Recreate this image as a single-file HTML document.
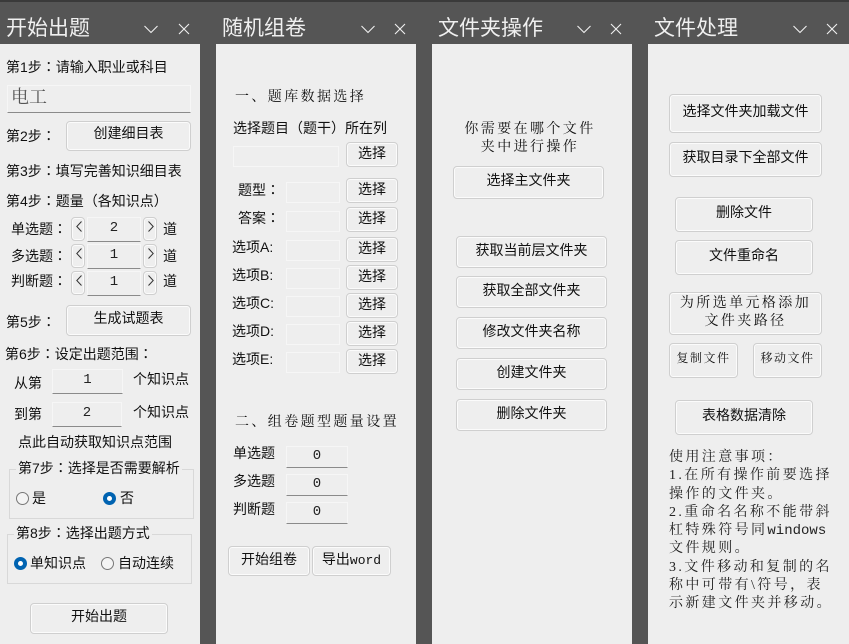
<!DOCTYPE html>
<html lang="zh"><head><meta charset="utf-8"><style>
html,body{margin:0;padding:0}
body{width:849px;height:644px;background:#555;position:relative;overflow:hidden;font:14px/20px "Liberation Sans","Noto Sans CJK SC",sans-serif;color:#111;text-spacing-trim:space-all}
#top{position:absolute;left:0;top:0;width:849px;height:2px;background:#3a3a3a}
.p{position:absolute;top:44px;height:600px;background:#eee}
.h{position:absolute;top:14px;font-size:21px;line-height:30px;color:#f0f0f0;white-space:nowrap}
svg.i{position:absolute;top:23px;width:16px;height:12px;fill:none;stroke:#f0f0f0;stroke-width:1.1}
svg.a{position:absolute;width:6px;height:11px;fill:none;stroke:#333;stroke-width:1}
.t{position:absolute;white-space:nowrap;line-height:20px}
.t i,.l i{font-style:normal;font-family:"Noto Sans CJK TC",sans-serif;font-feature-settings:"locl" 0}
.s{position:absolute;white-space:nowrap;font-family:"Liberation Serif","Noto Serif CJK SC",serif;font-size:14px;line-height:18px;letter-spacing:2.4px;color:#111}
.b{position:absolute;box-sizing:border-box;border:1px solid #cfcfcf;border-radius:4px;background:#eee;box-shadow:inset 0 0 0 1px #fbfbfb;text-align:center;white-space:nowrap;color:#111}
.f{position:absolute;box-sizing:border-box;background:#eee;border:1px solid #f6f6f6;border-bottom:1px solid #8a8a8a;text-align:center;color:#222;line-height:20px;font-family:"Liberation Mono",monospace}
.e{position:absolute;box-sizing:border-box;border:1px solid #f6f6f6;background:#eee}
.g{position:absolute;box-sizing:border-box;border:1px solid #d8d8d8}
.l{position:absolute;background:#eee;padding:0 2px;white-space:nowrap;line-height:20px}
.r{position:absolute;box-sizing:border-box;width:13px;height:13px;border-radius:50%;border:1px solid #777;background:#f4f4f4}
.c{position:absolute;box-sizing:border-box;width:13px;height:13px;border-radius:50%;border:4px solid #0063b1;background:#fff}
</style></head><body>
<div id="top"></div>

<div class="h" style="left:6px">开始出题</div>
<svg class="i" style="left:143px"><path d="M1.500 3L8 9.500L14.500 3"/></svg>
<svg class="i" style="left:176px"><path d="M3 1L13 11M13 1L3 11"/></svg>
<div class="h" style="left:222px">随机组卷</div>
<svg class="i" style="left:360px"><path d="M1.500 3L8 9.500L14.500 3"/></svg>
<svg class="i" style="left:392px"><path d="M3 1L13 11M13 1L3 11"/></svg>
<div class="h" style="left:438px">文件夹操作</div>
<svg class="i" style="left:576px"><path d="M1.500 3L8 9.500L14.500 3"/></svg>
<svg class="i" style="left:608px"><path d="M3 1L13 11M13 1L3 11"/></svg>
<div class="h" style="left:654px">文件处理</div>
<svg class="i" style="left:792px"><path d="M1.500 3L8 9.500L14.500 3"/></svg>
<svg class="i" style="left:824px"><path d="M3 1L13 11M13 1L3 11"/></svg>

<div class="p" style="left:0;width:200px"></div>
<div class="p" style="left:216px;width:200px"></div>
<div class="p" style="left:432px;width:200px"></div>
<div class="p" style="left:648px;width:201px"></div>

<!-- Panel 1 -->
<div class="t" style="left:6px;top:57px">第1步<i>：</i>请输入职业或科目</div>
<div class="f" style="left:7px;top:85px;width:184px;height:28px;text-align:left;padding-left:3px;font:18px/22px 'Liberation Serif','Noto Serif CJK SC',serif;color:#555">电工</div>
<div class="t" style="left:6px;top:126px">第2步<i>：</i></div>
<div class="b" style="left:66px;top:121px;width:125px;height:30px;line-height:22px">创建细目表</div>
<div class="t" style="left:6px;top:161px">第3步<i>：</i>填写完善知识细目表</div>
<div class="t" style="left:6px;top:191px">第4步<i>：</i>题量（各知识点）</div>

<div class="t" style="left:11px;top:219px">单选题<i>：</i></div>
<div class="b" style="left:71px;top:217px;width:14px;height:24px"></div>
<svg class="a" style="left:76px;top:221px"><path d="M5.500 .5L.8 5.500L5.500 10.500"/></svg>
<div class="f" style="left:87px;top:217px;width:54px;height:25px">2</div>
<div class="b" style="left:143px;top:217px;width:14px;height:24px"></div>
<svg class="a" style="left:148px;top:221px"><path d="M.5 .5L5.200 5.500L.5 10.500"/></svg>
<div class="t" style="left:163px;top:219px">道</div>

<div class="t" style="left:11px;top:246px">多选题<i>：</i></div>
<div class="b" style="left:71px;top:244px;width:14px;height:24px"></div>
<svg class="a" style="left:76px;top:248px"><path d="M5.500 .5L.8 5.500L5.500 10.500"/></svg>
<div class="f" style="left:87px;top:244px;width:54px;height:25px">1</div>
<div class="b" style="left:143px;top:244px;width:14px;height:24px"></div>
<svg class="a" style="left:148px;top:248px"><path d="M.5 .5L5.200 5.500L.5 10.500"/></svg>
<div class="t" style="left:163px;top:246px">道</div>

<div class="t" style="left:11px;top:271px">判断题<i>：</i></div>
<div class="b" style="left:71px;top:271px;width:14px;height:24px"></div>
<svg class="a" style="left:76px;top:275px"><path d="M5.500 .5L.8 5.500L5.500 10.500"/></svg>
<div class="f" style="left:87px;top:271px;width:54px;height:25px">1</div>
<div class="b" style="left:143px;top:271px;width:14px;height:24px"></div>
<svg class="a" style="left:148px;top:275px"><path d="M.5 .5L5.200 5.500L.5 10.500"/></svg>
<div class="t" style="left:163px;top:271px">道</div>

<div class="t" style="left:6px;top:312px">第5步<i>：</i></div>
<div class="b" style="left:66px;top:305px;width:125px;height:31px;line-height:24px">生成试题表</div>
<div class="t" style="left:5px;top:344px">第6步<i>：</i>设定出题范围<i>：</i></div>
<div class="t" style="left:14px;top:373px">从第</div>
<div class="f" style="left:52px;top:369px;width:71px;height:25px">1</div>
<div class="t" style="left:133px;top:369px">个知识点</div>
<div class="t" style="left:14px;top:404px">到第</div>
<div class="f" style="left:52px;top:402px;width:70px;height:25px">2</div>
<div class="t" style="left:133px;top:402px">个知识点</div>
<div class="t" style="left:18px;top:432px">点此自动获取知识点范围</div>

<div class="g" style="left:9px;top:469px;width:185px;height:50px"></div>
<div class="l" style="left:16px;top:458px">第7步<i>：</i>选择是否需要解析</div>
<div class="r" style="left:16px;top:492px"></div>
<div class="t" style="left:32px;top:488px">是</div>
<div class="c" style="left:103px;top:492px"></div>
<div class="t" style="left:120px;top:488px">否</div>

<div class="g" style="left:7px;top:534px;width:185px;height:50px"></div>
<div class="l" style="left:14px;top:523px">第8步<i>：</i>选择出题方式</div>
<div class="c" style="left:14px;top:557px"></div>
<div class="t" style="left:30px;top:553px">单知识点</div>
<div class="r" style="left:101px;top:557px"></div>
<div class="t" style="left:118px;top:553px">自动连续</div>
<div class="b" style="left:30px;top:603px;width:138px;height:31px;line-height:25px">开始出题</div>

<!-- Panel 2 -->
<div class="s" style="left:235px;top:89px">一、题库数据选择</div>
<div class="t" style="left:233px;top:118px">选择题目（题干）所在列</div>
<div class="e" style="left:233px;top:146px;width:106px;height:21px"></div>
<div class="b" style="left:346px;top:142px;width:52px;height:25px;line-height:21px">选择</div>
<div class="t" style="left:238px;top:180px">题型<i>：</i></div>
<div class="e" style="left:286px;top:182px;width:54px;height:21px"></div>
<div class="b" style="left:346px;top:178px;width:52px;height:25px;line-height:21px">选择</div>
<div class="t" style="left:238px;top:208px">答案<i>：</i></div>
<div class="e" style="left:286px;top:211px;width:54px;height:21px"></div>
<div class="b" style="left:346px;top:207px;width:52px;height:25px;line-height:21px">选择</div>
<div class="t" style="left:232px;top:237px">选项A:</div>
<div class="e" style="left:286px;top:240px;width:54px;height:21px"></div>
<div class="b" style="left:346px;top:237px;width:52px;height:25px;line-height:21px">选择</div>
<div class="t" style="left:232px;top:265px">选项B:</div>
<div class="e" style="left:286px;top:268px;width:54px;height:21px"></div>
<div class="b" style="left:346px;top:265px;width:52px;height:25px;line-height:21px">选择</div>
<div class="t" style="left:232px;top:293px">选项C:</div>
<div class="e" style="left:286px;top:296px;width:54px;height:21px"></div>
<div class="b" style="left:346px;top:293px;width:52px;height:25px;line-height:21px">选择</div>
<div class="t" style="left:232px;top:321px">选项D:</div>
<div class="e" style="left:286px;top:324px;width:54px;height:21px"></div>
<div class="b" style="left:346px;top:321px;width:52px;height:25px;line-height:21px">选择</div>
<div class="t" style="left:232px;top:349px">选项E:</div>
<div class="e" style="left:286px;top:352px;width:54px;height:21px"></div>
<div class="b" style="left:346px;top:349px;width:52px;height:25px;line-height:21px">选择</div>
<div class="s" style="left:235px;top:414px">二、组卷题型题量设置</div>
<div class="t" style="left:233px;top:443px">单选题</div>
<div class="f" style="left:286px;top:446px;width:62px;height:22px;line-height:19px">0</div>
<div class="t" style="left:233px;top:471px">多选题</div>
<div class="f" style="left:286px;top:474px;width:62px;height:22px;line-height:19px">0</div>
<div class="t" style="left:233px;top:499px">判断题</div>
<div class="f" style="left:286px;top:502px;width:62px;height:22px;line-height:19px">0</div>
<div class="b" style="left:228px;top:546px;width:82px;height:30px;line-height:25px">开始组卷</div>
<div class="b" style="left:312px;top:546px;width:79px;height:30px;line-height:25px">导出<span style="font:13px 'Liberation Mono',monospace">word</span></div>

<!-- Panel 3 -->
<div class="s" style="left:430px;width:200px;text-align:center;top:121px">你需要在哪个文件</div>
<div class="s" style="left:430px;width:200px;text-align:center;top:139px">夹中进行操作</div>
<div class="b" style="left:453px;top:166px;width:151px;height:33px;line-height:27px">选择主文件夹</div>
<div class="b" style="left:456px;top:236px;width:151px;height:32px;line-height:26px">获取当前层文件夹</div>
<div class="b" style="left:456px;top:276px;width:151px;height:32px;line-height:26px">获取全部文件夹</div>
<div class="b" style="left:456px;top:317px;width:151px;height:32px;line-height:26px">修改文件夹名称</div>
<div class="b" style="left:456px;top:358px;width:151px;height:32px;line-height:26px">创建文件夹</div>
<div class="b" style="left:456px;top:399px;width:151px;height:32px;line-height:26px">删除文件夹</div>

<!-- Panel 4 -->
<div class="b" style="left:669px;top:94px;width:153px;height:39px;line-height:33px">选择文件夹加载文件</div>
<div class="b" style="left:669px;top:142px;width:153px;height:35px;line-height:29px">获取目录下全部文件</div>
<div class="b" style="left:675px;top:197px;width:138px;height:35px;line-height:29px">删除文件</div>
<div class="b" style="left:675px;top:240px;width:138px;height:35px;line-height:29px">文件重命名</div>
<div class="b" style="left:669px;top:292px;width:153px;height:43px"></div>
<div class="s" style="left:669px;width:153px;text-align:center;top:295px">为所选单元格添加</div>
<div class="s" style="left:669px;width:153px;text-align:center;top:313px">文件夹路径</div>
<div class="b" style="left:669px;top:343px;width:69px;height:35px"></div>
<div class="s" style="left:669px;width:69px;text-align:center;top:349px;font-size:12px;letter-spacing:1.5px">复制文件</div>
<div class="b" style="left:753px;top:343px;width:69px;height:35px"></div>
<div class="s" style="left:753px;width:69px;text-align:center;top:349px;font-size:12px;letter-spacing:1.5px">移动文件</div>
<div class="b" style="left:675px;top:400px;width:138px;height:35px;line-height:29px">表格数据清除</div>
<div class="s" style="left:669px;top:449px;line-height:18.250px;font-size:14px;letter-spacing:2.4px;color:#222">使用注意事项：<br>1.在所有操作前要选择<br>操作的文件夹。<br>2.重命名名称不能带斜<br>杠特殊符号同<span style="font-family:'Liberation Mono',monospace;letter-spacing:0">windows</span><br>文件规则。<br>3.文件移动和复制的名<br>称中可带有\符号，表<br>示新建文件夹并移动。</div>
</body></html>
